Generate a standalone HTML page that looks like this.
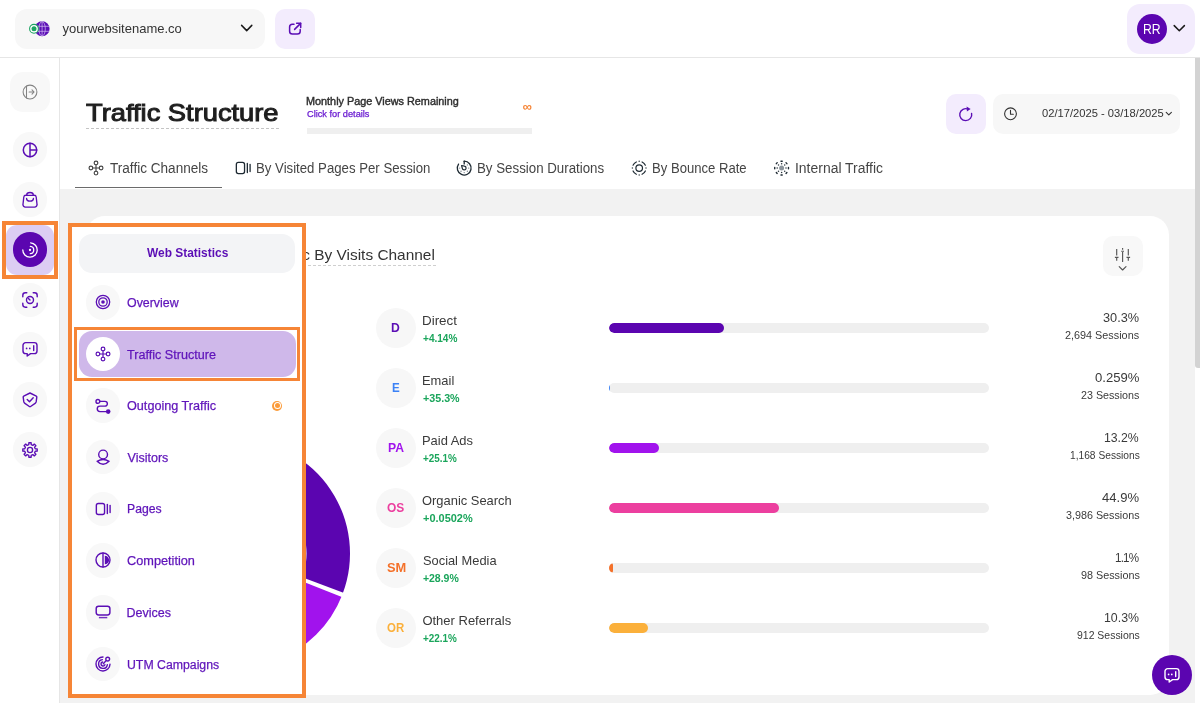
<!DOCTYPE html>
<html lang="en">
<head>
<meta charset="utf-8">
<title>Traffic Structure</title>
<style>
*{box-sizing:border-box;margin:0;padding:0}
html,body{width:1200px;height:703px;overflow:hidden;background:#fff}
body{font-family:"Liberation Sans",sans-serif;color:#333;position:relative}
#root{position:absolute;left:0;top:0;width:1200px;height:703px;will-change:transform}
.abs{position:absolute}
.t{position:absolute;white-space:nowrap;line-height:1}
svg{position:absolute;overflow:visible}
#header{position:absolute;left:0;top:0;width:1200px;height:58px;background:#fff;border-bottom:1px solid #e6e6e6}
#sidebar{position:absolute;left:0;top:58px;width:60px;height:645px;background:#fff;border-right:1px solid #e6e6e6}
#grey{position:absolute;left:60px;top:188.5px;width:1135px;height:515px;background:#f2f2f2}
#card{position:absolute;left:86px;top:215.5px;width:1083.3px;height:479.4px;background:#fff;border-radius:19px}
.track{position:absolute;left:608.8px;width:380.2px;height:10.2px;border-radius:5.1px;background:#efefef;overflow:hidden}
.fill{position:absolute;left:0;top:0;height:10.2px;border-radius:5.1px}
</style>
</head>
<body>
<div id="root">
<div id="header"></div>
<div class="abs" style="left:15px;top:8.75px;width:250px;height:40px;background:#f7f7f7;border-radius:12px"></div>
<svg style="left:28px;top:20px" width="24" height="18" viewBox="28 20 24 18">
<circle cx="42.1" cy="28.8" r="7.5" fill="#5b0eb5"/>
<g stroke="#d9c4f5" stroke-width="0.8" fill="none" stroke-opacity="0.85"><ellipse cx="42.1" cy="28.8" rx="3.2" ry="7.2"/><line x1="42.1" y1="21.5" x2="42.1" y2="36"/><line x1="35" y1="26.3" x2="49.4" y2="26.3"/><line x1="35" y1="31.3" x2="49.4" y2="31.3"/></g>
<circle cx="34" cy="28.8" r="4.4" fill="#fff" stroke="#1da463" stroke-width="1.1"/><circle cx="34" cy="28.8" r="2.5" fill="#1da463"/></svg>
<div class="t" style="left:62.60px;top:21.60px;font-size:13px;color:#333">yourwebsitename.co</div>
<svg style="left:240px;top:23px" width="14" height="10" viewBox="240 23 14 10"><path d="M241.6 25.4 L246.7 30.6 L251.8 25.4" fill="none" stroke="#1a1a1a" stroke-width="1.5" stroke-linecap="round" stroke-linejoin="round"/></svg>
<div class="abs" style="left:275px;top:8.75px;width:40px;height:40px;background:#f3ecfd;border-radius:10px"></div>
<svg style="left:287px;top:21px" width="16" height="16" viewBox="287 21 16 16"><g fill="none" stroke="#5b0eb5" stroke-width="1.5" stroke-linecap="round" stroke-linejoin="round"><path d="M294 24.3 H292.4 a2.8 2.8 0 0 0 -2.8 2.8 V31.2 a2.8 2.8 0 0 0 2.8 2.8 H297.4 a2.8 2.8 0 0 0 2.8 -2.8 V29.6"/><path d="M294.6 29.4 L300.6 23.4"/><path d="M296.6 23.3 H300.7 V27.4"/></g></svg>
<div class="abs" style="left:1127px;top:4px;width:68px;height:50px;background:#f3ecfd;border-radius:13px"></div>
<div class="abs" style="left:1136.5px;top:14px;width:30px;height:30px;background:#5b05b0;border-radius:50%"></div>
<div class="t" style="left:1142.69px;top:22.15px;font-size:14px;color:#fff;transform:scaleX(0.8744);transform-origin:left center">RR</div>
<svg style="left:1172px;top:23px" width="14" height="10" viewBox="1172 23 14 10"><path d="M1174.2 25.6 L1179.3 30.8 L1184.4 25.6" fill="none" stroke="#1a1a1a" stroke-width="1.5" stroke-linecap="round" stroke-linejoin="round"/></svg>
<div id="sidebar"></div>
<div class="abs" style="left:10px;top:71.5px;width:40px;height:40px;background:#f8f8f8;border-radius:13px"></div>
<svg style="left:18.0px;top:79.7px;color:#838383" width="24" height="24" viewBox="-12.0 -12.0 24 24"><g fill="none" stroke="currentColor" stroke-width="1.05" stroke-linecap="round" stroke-linejoin="round"><circle cx="0" cy="0" r="6.9"/><path d="M-3.5 -5.9 V5.9"/><path d="M-0.9 0 H4 M2 -2.1 L4.1 0 L2 2.1"/></g></svg>
<div class="abs" style="left:12.7px;top:132.45px;width:34.6px;height:34.6px;background:#f8f8f8;border-radius:50%"></div>
<div class="abs" style="left:12.7px;top:182.45px;width:34.6px;height:34.6px;background:#f8f8f8;border-radius:50%"></div>
<div class="abs" style="left:12.7px;top:282.59999999999997px;width:34.6px;height:34.6px;background:#f8f8f8;border-radius:50%"></div>
<div class="abs" style="left:12.7px;top:332.4px;width:34.6px;height:34.6px;background:#f8f8f8;border-radius:50%"></div>
<div class="abs" style="left:12.7px;top:382.3px;width:34.6px;height:34.6px;background:#f8f8f8;border-radius:50%"></div>
<div class="abs" style="left:12.7px;top:432.4px;width:34.6px;height:34.6px;background:#f8f8f8;border-radius:50%"></div>
<svg style="left:18.0px;top:137.75px;color:#5b0eb5" width="24" height="24" viewBox="-12.0 -12.0 24 24"><g fill="none" stroke="currentColor" stroke-width="1.5" stroke-linecap="round" stroke-linejoin="round"><circle cx="0" cy="0" r="6.7"/><path d="M0 -6.7 V6.7 M0 0 H6.7"/></g></svg>
<svg style="left:18.0px;top:187.75px;color:#5b0eb5" width="24" height="24" viewBox="-12.0 -12.0 24 24"><g fill="none" stroke="currentColor" stroke-width="1.35" stroke-linecap="round" stroke-linejoin="round"><path d="M-4.2 -4.7 H4.2 a2 2 0 0 1 2 1.7 L7 4.2 a2.5 2.5 0 0 1 -2.5 2.9 H-4.5 a2.5 2.5 0 0 1 -2.5 -2.9 L-6.2 -3 a2 2 0 0 1 2 -1.7 Z"/><path d="M-3.3 -4.9 a3.3 2.6 0 0 1 6.6 0"/><path d="M-3.4 -1.5 v0.3 a3.4 2.4 0 0 0 6.8 0 v-0.3"/></g></svg>
<div class="abs" style="left:2px;top:221px;width:56px;height:58px;border:4px solid #f68536;background:#fff"></div>
<div class="abs" style="left:6px;top:225px;width:48px;height:50px;background:#dccdf3;border-radius:11px"></div>
<div class="abs" style="left:12.7px;top:232.2px;width:34.8px;height:34.8px;background:#5b05b0;border-radius:50%"></div>
<svg style="left:18.1px;top:237.9px;color:#fff" width="24" height="24" viewBox="-12.0 -12.0 24 24"><g fill="none" stroke="currentColor" stroke-width="1.3" stroke-linecap="round" stroke-linejoin="round"><path d="M0.63 -7.17 A7.2 7.2 0 1 1 -7.20 0.00"/><path d="M0.32 -3.69 A3.7 3.7 0 0 1 0.32 3.69"/></g><circle cx="0" cy="0" r="1.15" fill="#fff"/></svg>
<svg style="left:18.0px;top:287.9px;color:#5b0eb5" width="24" height="24" viewBox="-12.0 -12.0 24 24"><g fill="none" stroke="currentColor" stroke-width="1.4" stroke-linecap="round" stroke-linejoin="round"><path d="M-7.2 -3.2 V-4.6 a2.6 2.6 0 0 1 2.6 -2.6 H-3.2"/><path d="M7.2 -3.2 V-4.6 a2.6 2.6 0 0 0 -2.6 -2.6 H3.2"/><path d="M7.2 3.2 V4.6 a2.6 2.6 0 0 1 -2.6 2.6 H3.2"/><path d="M-7.2 3.2 V4.6 a2.6 2.6 0 0 0 2.6 2.6 H-3.2"/><circle cx="0" cy="0" r="3.5"/><path d="M0 0 L-1.6 -1.6"/></g></svg>
<svg style="left:18.0px;top:337.4px;color:#5b0eb5" width="24" height="24" viewBox="-12.0 -12.0 24 24"><g fill="none" stroke="currentColor" stroke-width="1.4" stroke-linecap="round" stroke-linejoin="round"><path d="M-4.3 -6.4 H4.3 a2.7 2.7 0 0 1 2.7 2.7 V1.9 a2.7 2.7 0 0 1 -2.7 2.7 H0.6 L-2.8 7 V4.6 H-4.3 a2.7 2.7 0 0 1 -2.7 -2.7 V-3.7 a2.7 2.7 0 0 1 2.7 -2.7 Z"/><path d="M3.7 -3.3 V1.6"/></g><circle cx="-3.4" cy="-0.6" r="0.85" fill="currentColor"/><circle cx="-0.2" cy="-0.6" r="0.85" fill="currentColor"/></svg>
<svg style="left:18.0px;top:387.6px;color:#5b0eb5" width="24" height="24" viewBox="-12.0 -12.0 24 24"><g fill="none" stroke="currentColor" stroke-width="1.4" stroke-linecap="round" stroke-linejoin="round"><path d="M0 -7 L6.3 -3.9 Q6.9 -3.6 6.8 -2.9 L6.2 1.7 Q6 2.8 5.1 3.4 L0.6 6.5 Q0 6.9 -0.6 6.5 L-5.1 3.4 Q-6 2.8 -6.2 1.7 L-6.8 -2.9 Q-6.9 -3.6 -6.3 -3.9 Z"/><path d="M-2.8 -0.5 L-0.5 1.8 L3.2 -2.3"/></g></svg>
<svg style="left:18.0px;top:437.7px;color:#5b0eb5" width="24" height="24" viewBox="-12.0 -12.0 24 24"><g fill="none" stroke="currentColor" stroke-width="1.35" stroke-linecap="round" stroke-linejoin="round"><path d="M-1.21 -5.26 L-1.14 -7.21 L1.14 -7.21 L1.21 -5.26 L2.86 -4.58 L4.29 -5.91 L5.91 -4.29 L4.58 -2.86 L5.26 -1.21 L7.21 -1.14 L7.21 1.14 L5.26 1.21 L4.58 2.86 L5.91 4.29 L4.29 5.91 L2.86 4.58 L1.21 5.26 L1.14 7.21 L-1.14 7.21 L-1.21 5.26 L-2.86 4.58 L-4.29 5.91 L-5.91 4.29 L-4.58 2.86 L-5.26 1.21 L-7.21 1.14 L-7.21 -1.14 L-5.26 -1.21 L-4.58 -2.86 L-5.91 -4.29 L-4.29 -5.91 L-2.86 -4.58 Z"/><circle cx="0" cy="0" r="2.6"/></g></svg>
<div class="t" style="left:86.07px;top:101.28px;font-size:24px;color:#1e1e1e;transform:scaleX(1.1367);transform-origin:left center;-webkit-text-stroke:1px #1e1e1e">Traffic Structure</div>
<div class="abs" style="left:86px;top:128px;width:193px;height:0;border-top:1px dashed #c4c4c4"></div>
<div class="t" style="left:306.42px;top:95.61px;font-size:10.5px;color:#2e2e2e;transform:scaleX(1.0323);transform-origin:left center;-webkit-text-stroke:0.4px #2e2e2e">Monthly Page Views Remaining</div>
<div class="t" style="left:306.84px;top:109.78px;font-size:9px;color:#6a1bd1;transform:scaleX(1.0238);transform-origin:left center;-webkit-text-stroke:0.25px #6a1bd1">Click for details</div>
<div class="t" style="left:522.5px;top:100px;font-size:13px;font-weight:bold;color:#f68536">&#8734;</div>
<div class="abs" style="left:307.3px;top:127.7px;width:225px;height:6px;background:#efefef"></div>
<div class="abs" style="left:946px;top:94px;width:40px;height:40px;background:#f3ecfd;border-radius:10px"></div>
<svg style="left:957px;top:106px" width="18" height="18" viewBox="957 106 18 18"><g fill="none" stroke="#5b0eb5" stroke-width="1.4" stroke-linecap="round" stroke-linejoin="round"><path d="M968.2 109.2 A6 6 0 1 0 971.6 113.4"/></g><path d="M966.6 106.6 L970.6 109.1 L966.9 111.6 Z" fill="#5b0eb5"/></svg>
<div class="abs" style="left:992.7px;top:94px;width:187.3px;height:40px;background:#f7f7f7;border-radius:10px"></div>
<svg style="left:1003px;top:106px" width="16" height="16" viewBox="1003 106 16 16"><g fill="none" stroke="#333" stroke-width="1.1" stroke-linecap="round" stroke-linejoin="round"><circle cx="1010.5" cy="113.8" r="5.9"/><path d="M1010.5 110.4 V114.3 H1013.3"/></g></svg>
<div class="t" style="left:1042.29px;top:108.39px;font-size:11px;color:#333;transform:scaleX(1.0154);transform-origin:left center">02/17/2025 - 03/18/2025</div>
<svg style="left:1165px;top:111px" width="8" height="6" viewBox="1165 111 8 6"><path d="M1166.2 112.4 L1168.8 114.9 L1171.4 112.4" fill="none" stroke="#333" stroke-width="1.1" stroke-linecap="round" stroke-linejoin="round"/></svg>
<svg style="left:83.75px;top:156.1px;color:#444" width="24" height="24" viewBox="-12.0 -12.0 24 24"><g fill="none" stroke="currentColor" stroke-width="1.15" stroke-linecap="round" stroke-linejoin="round"><circle cx="0" cy="-5.1" r="1.85"/><circle cx="0" cy="5.1" r="1.85"/><circle cx="-5.1" cy="0" r="1.85"/><circle cx="5.1" cy="0" r="1.85"/><path d="M0 -3.25 V3.25 M-3.25 0 H3.25"/></g></svg>
<div class="t" style="left:109.99px;top:161.05px;font-size:14px;color:#454545;transform:scaleX(0.9701);transform-origin:left center">Traffic Channels</div>
<svg style="left:230.5px;top:156.1px;color:#1e2a33" width="24" height="24" viewBox="-12.0 -12.0 24 24"><g fill="none" stroke="currentColor" stroke-width="1.3" stroke-linecap="round" stroke-linejoin="round"><rect x="-6.65" y="-5.55" width="8.2" height="11.1" rx="2"/><path d="M4.35 -4.6 V4.6"/><path d="M7.1 -3.5 V3.5"/></g></svg>
<div class="t" style="left:255.77px;top:161.05px;font-size:14px;color:#454545;transform:scaleX(0.9428);transform-origin:left center">By Visited Pages Per Session</div>
<svg style="left:455px;top:159px" width="18" height="18" viewBox="455 159 18 18"><g fill="none" stroke="#1e2a33" stroke-width="1.3" stroke-linecap="round" stroke-linejoin="round"><path d="M464.20 161.20 A6.9 6.9 0 1 1 458.55 164.14"/><path d="M464.2 161.2 V163.9"/><path d="M461.59999999999997 165.5 L464.5 166.2 A1.9 1.9 0 1 1 462.3 168.4 Z" stroke-width="1.2"/></g><g fill="#7a858d"><circle cx="467.38" cy="164.92" r="0.7"/><circle cx="468.70" cy="168.10" r="0.7"/><circle cx="467.38" cy="171.28" r="0.7"/><circle cx="464.20" cy="172.60" r="0.7"/><circle cx="461.02" cy="171.28" r="0.7"/><circle cx="459.70" cy="168.10" r="0.7"/></g></svg>
<div class="t" style="left:477.26px;top:161.05px;font-size:14px;color:#454545;transform:scaleX(0.9500);transform-origin:left center">By Session Durations</div>
<svg style="left:630px;top:159px" width="18" height="18" viewBox="630 159 18 18"><g fill="none" stroke="#1e2a33" stroke-width="1.2" stroke-linecap="round"><circle cx="639.2" cy="168.1" r="3.3"/><path d="M642.07 161.94 A6.8 6.8 0 0 1 645.36 165.23"/><path d="M645.36 170.97 A6.8 6.8 0 0 1 642.07 174.26"/><path d="M636.33 174.26 A6.8 6.8 0 0 1 633.04 170.97"/><path d="M633.04 165.23 A6.8 6.8 0 0 1 636.33 161.94"/></g><g fill="#3a444c"><circle cx="639.20" cy="161.30" r="0.75"/><circle cx="646.00" cy="168.10" r="0.75"/><circle cx="639.20" cy="174.90" r="0.75"/><circle cx="632.40" cy="168.10" r="0.75"/></g></svg>
<div class="t" style="left:652.48px;top:161.05px;font-size:14px;color:#454545;transform:scaleX(0.9356);transform-origin:left center">By Bounce Rate</div>
<svg style="left:772px;top:159px" width="19" height="19" viewBox="772 159 19 19"><circle cx="781.6" cy="168.1" r="2.5" fill="#8b949b"/><g fill="none" stroke="#1e2a33" stroke-width="1.4" stroke-linecap="round"><path d="M781.00 161.23 A6.9 6.9 0 0 1 782.20 161.23"/><path d="M786.04 162.81 A6.9 6.9 0 0 1 786.89 163.66"/><path d="M788.47 167.50 A6.9 6.9 0 0 1 788.47 168.70"/><path d="M786.89 172.54 A6.9 6.9 0 0 1 786.04 173.39"/><path d="M782.20 174.97 A6.9 6.9 0 0 1 781.00 174.97"/><path d="M777.16 173.39 A6.9 6.9 0 0 1 776.31 172.54"/><path d="M774.73 168.70 A6.9 6.9 0 0 1 774.73 167.50"/><path d="M776.31 163.66 A6.9 6.9 0 0 1 777.16 162.81"/></g><g fill="#2a353d"><circle cx="781.60" cy="163.70" r="0.75"/><circle cx="784.71" cy="164.99" r="0.75"/><circle cx="786.00" cy="168.10" r="0.75"/><circle cx="784.71" cy="171.21" r="0.75"/><circle cx="781.60" cy="172.50" r="0.75"/><circle cx="778.49" cy="171.21" r="0.75"/><circle cx="777.20" cy="168.10" r="0.75"/><circle cx="778.49" cy="164.99" r="0.75"/></g></svg>
<div class="t" style="left:794.61px;top:161.05px;font-size:14px;color:#454545;transform:scaleX(0.9955);transform-origin:left center">Internal Traffic</div>
<div class="abs" style="left:75px;top:186.5px;width:146.5px;height:1.5px;background:#6b6b6b"></div>
<div id="grey"></div>
<div class="abs" style="left:1195px;top:58px;width:5px;height:645px;background:#fff"></div>
<div class="abs" style="left:1195.2px;top:57.8px;width:8px;height:310.5px;background:#d3d3d3;border-radius:0 0 0 3px"></div>
<div id="card"></div>
<svg style="left:110px;top:430px" width="250" height="250" viewBox="110 430 250 250"><path d="M238.70 439.04 A114.5 114.5 0 0 1 342.67 593.82 L301.95 578.50 A71 71 0 0 0 237.48 482.53 Z" fill="#5b05b0"/><path d="M342.67 593.82 A114.5 114.5 0 0 1 342.00 595.55 L301.54 579.58 A71 71 0 0 0 301.95 578.50 Z" fill="#3b82f6"/><path d="M342.00 595.55 A114.5 114.5 0 0 1 276.46 660.42 L260.90 619.80 A71 71 0 0 0 301.54 579.58 Z" fill="#a113ed"/><path d="M276.46 660.42 A114.5 114.5 0 0 1 162.80 465.04 L190.42 498.65 A71 71 0 0 0 260.90 619.80 Z" fill="#ec3f9f"/><path d="M162.80 465.04 A114.5 114.5 0 0 1 169.08 460.24 L194.31 495.67 A71 71 0 0 0 190.42 498.65 Z" fill="#f4712a"/><path d="M169.08 460.24 A114.5 114.5 0 0 1 238.70 439.04 L237.48 482.53 A71 71 0 0 0 194.31 495.67 Z" fill="#fbb03b"/><path d="M238.72 438.05 L237.45 483.53" stroke="#fff" stroke-width="2.6"/><path d="M343.60 594.17 L301.02 578.15" stroke="#fff" stroke-width="2.6"/><path d="M342.93 595.92 L300.61 579.21" stroke="#fff" stroke-width="2.6"/><path d="M276.82 661.36 L260.54 618.87" stroke="#fff" stroke-width="2.6"/><path d="M162.16 464.27 L191.05 499.42" stroke="#fff" stroke-width="2.6"/><path d="M168.50 459.42 L194.89 496.48" stroke="#fff" stroke-width="2.6"/></svg>
<div class="t" style="left:268.18px;top:246.60px;font-size:15px;color:#333;transform:scaleX(1.0280);transform-origin:left center">Traffic By Visits Channel</div>
<div class="abs" style="left:268px;top:265px;width:167.5px;height:0;border-top:1px dashed #cfcfcf"></div>
<div class="abs" style="left:1102.5px;top:235.5px;width:40px;height:40px;background:#f8f8f8;border-radius:10px"></div>
<svg style="left:1112px;top:245px" width="22" height="28" viewBox="1112 245 22 28"><g fill="none" stroke="#555" stroke-width="1.15" stroke-linecap="butt"><path d="M1116.7 249 V255.6 M1116.7 258 V260.8 M1114.9 257.4 H1118.5"/><path d="M1122.6 248 V249.8 M1122.6 252 V262 M1121.2 251.2 H1124"/><path d="M1128.3 249 V255.6 M1128.3 258 V260.8 M1126.5 257.4 H1130.1"/><path d="M1119.2 266.6 L1122.6 270 L1126 266.6" stroke-linecap="round" stroke-linejoin="round"/></g></svg>
<div class="abs" style="left:376px;top:308px;width:40px;height:40px;background:#f7f7f7;border-radius:50%"></div>
<div class="t" style="left:391.34px;top:321.40px;font-size:13px;color:#5b0eb5;font-weight:bold;transform:scaleX(0.9354);transform-origin:left center">D</div>
<div class="t" style="left:421.95px;top:314.00px;font-size:13px;color:#3a3a3a;transform:scaleX(1.0311);transform-origin:left center">Direct</div>
<div class="t" style="left:422.92px;top:332.71px;font-size:10.5px;color:#1aa55b;font-weight:bold;transform:scaleX(0.9584);transform-origin:left center">+4.14%</div>
<div class="track" style="top:323px"><div class="fill" style="width:115.1px;background:#5b05b0"></div></div>
<div class="t" style="left:1103.10px;top:311.10px;font-size:13px;color:#3a3a3a;transform:scaleX(0.9787);transform-origin:left center">30.3%</div>
<div class="t" style="left:1065.28px;top:329.91px;font-size:10.5px;color:#3a3a3a;transform:scaleX(1.0317);transform-origin:left center">2,694 Sessions</div>
<div class="abs" style="left:376px;top:368px;width:40px;height:40px;background:#f7f7f7;border-radius:50%"></div>
<div class="t" style="left:391.83px;top:381.40px;font-size:13px;color:#3b82f6;font-weight:bold;transform:scaleX(0.8915);transform-origin:left center">E</div>
<div class="t" style="left:421.99px;top:374.00px;font-size:13px;color:#3a3a3a;transform:scaleX(0.9924);transform-origin:left center">Email</div>
<div class="t" style="left:422.89px;top:392.71px;font-size:10.5px;color:#1aa55b;font-weight:bold;transform:scaleX(1.0208);transform-origin:left center">+35.3%</div>
<div class="track" style="top:383px"><div class="fill" style="width:1.2px;background:#3b82f6"></div></div>
<div class="t" style="left:1094.79px;top:371.10px;font-size:13px;color:#3a3a3a;transform:scaleX(1.0070);transform-origin:left center">0.259%</div>
<div class="t" style="left:1080.99px;top:389.91px;font-size:10.5px;color:#3a3a3a;transform:scaleX(1.0204);transform-origin:left center">23 Sessions</div>
<div class="abs" style="left:376px;top:428px;width:40px;height:40px;background:#f7f7f7;border-radius:50%"></div>
<div class="t" style="left:387.64px;top:441.40px;font-size:13px;color:#a113ed;font-weight:bold;transform:scaleX(0.9355);transform-origin:left center">PA</div>
<div class="t" style="left:421.99px;top:434.00px;font-size:13px;color:#3a3a3a;transform:scaleX(0.9939);transform-origin:left center">Paid Ads</div>
<div class="t" style="left:422.92px;top:452.71px;font-size:10.5px;color:#1aa55b;font-weight:bold;transform:scaleX(0.9414);transform-origin:left center">+25.1%</div>
<div class="track" style="top:443px"><div class="fill" style="width:50.2px;background:#a113ed"></div></div>
<div class="t" style="left:1104.43px;top:431.10px;font-size:13px;color:#3a3a3a;transform:scaleX(0.9422);transform-origin:left center">13.2%</div>
<div class="t" style="left:1069.52px;top:449.91px;font-size:10.5px;color:#3a3a3a;transform:scaleX(0.9724);transform-origin:left center">1,168 Sessions</div>
<div class="abs" style="left:376px;top:488px;width:40px;height:40px;background:#f7f7f7;border-radius:50%"></div>
<div class="t" style="left:387.23px;top:501.40px;font-size:13px;color:#ec3f9f;font-weight:bold;transform:scaleX(0.9205);transform-origin:left center">OS</div>
<div class="t" style="left:422.39px;top:494.00px;font-size:13px;color:#3a3a3a;transform:scaleX(0.9935);transform-origin:left center">Organic Search</div>
<div class="t" style="left:422.88px;top:512.71px;font-size:10.5px;color:#1aa55b;font-weight:bold;transform:scaleX(1.0437);transform-origin:left center">+0.0502%</div>
<div class="track" style="top:503px"><div class="fill" style="width:170.6px;background:#ec3f9f"></div></div>
<div class="t" style="left:1102.20px;top:491.10px;font-size:13px;color:#3a3a3a;transform:scaleX(1.0036);transform-origin:left center">44.9%</div>
<div class="t" style="left:1065.79px;top:509.91px;font-size:10.5px;color:#3a3a3a;transform:scaleX(1.0247);transform-origin:left center">3,986 Sessions</div>
<div class="abs" style="left:376px;top:548px;width:40px;height:40px;background:#f7f7f7;border-radius:50%"></div>
<div class="t" style="left:386.50px;top:561.40px;font-size:13px;color:#f4712a;font-weight:bold;transform:scaleX(0.9880);transform-origin:left center">SM</div>
<div class="t" style="left:422.60px;top:554.00px;font-size:13px;color:#3a3a3a;transform:scaleX(0.9878);transform-origin:left center">Social Media</div>
<div class="t" style="left:422.90px;top:572.71px;font-size:10.5px;color:#1aa55b;font-weight:bold">+28.9%</div>
<div class="track" style="top:563px"><div class="fill" style="width:4.2px;background:#f4712a"></div></div>
<div class="t" style="left:1115.07px;top:551.10px;font-size:13px;color:#3a3a3a;letter-spacing:-0.9px;transform:scaleX(0.8939);transform-origin:left center">1.1%</div>
<div class="t" style="left:1080.54px;top:569.91px;font-size:10.5px;color:#3a3a3a;transform:scaleX(1.0283);transform-origin:left center">98 Sessions</div>
<div class="abs" style="left:376px;top:608px;width:40px;height:40px;background:#f7f7f7;border-radius:50%"></div>
<div class="t" style="left:387.24px;top:621.40px;font-size:13px;color:#fbb03b;font-weight:bold;transform:scaleX(0.8808);transform-origin:left center">OR</div>
<div class="t" style="left:422.39px;top:614.00px;font-size:13px;color:#3a3a3a">Other Referrals</div>
<div class="t" style="left:422.92px;top:632.71px;font-size:10.5px;color:#1aa55b;font-weight:bold;transform:scaleX(0.9442);transform-origin:left center">+22.1%</div>
<div class="track" style="top:623px"><div class="fill" style="width:39.1px;background:#fbb03b"></div></div>
<div class="t" style="left:1104.13px;top:611.10px;font-size:13px;color:#3a3a3a;transform:scaleX(0.9506);transform-origin:left center">10.3%</div>
<div class="t" style="left:1076.55px;top:629.91px;font-size:10.5px;color:#3a3a3a;transform:scaleX(0.9961);transform-origin:left center">912 Sessions</div>
<div class="abs" style="left:1151.6px;top:654.8px;width:40px;height:40px;background:#5b05b0;border-radius:50%"></div>
<svg style="left:1159.6px;top:662.7px;color:#fff" width="24" height="24" viewBox="-12.0 -12.0 24 24"><g fill="none" stroke="currentColor" stroke-width="1.4" stroke-linecap="round" stroke-linejoin="round"><path d="M-4.3 -6.4 H4.3 a2.7 2.7 0 0 1 2.7 2.7 V1.9 a2.7 2.7 0 0 1 -2.7 2.7 H0.6 L-2.8 7 V4.6 H-4.3 a2.7 2.7 0 0 1 -2.7 -2.7 V-3.7 a2.7 2.7 0 0 1 2.7 -2.7 Z"/><path d="M3.7 -3.3 V1.6"/></g><circle cx="-3.4" cy="-0.6" r="0.85" fill="currentColor"/><circle cx="-0.2" cy="-0.6" r="0.85" fill="currentColor"/></svg>
<div class="abs" style="left:68px;top:223px;width:238px;height:475px;background:#fff;border:4.4px solid #f68536"></div>
<div class="abs" style="left:79px;top:233.5px;width:216px;height:39.5px;background:#f3f4f6;border-radius:13px"></div>
<div class="t" style="left:146.70px;top:247.14px;font-size:12px;color:#5b0eb5;font-weight:bold;transform:scaleX(0.9935);transform-origin:left center">Web Statistics</div>
<div class="abs" style="left:74px;top:327px;width:226px;height:54px;border:3.6px solid #f68536;background:#fff"></div>
<div class="abs" style="left:79px;top:331px;width:216.5px;height:46px;background:#cfb8ea;border-radius:13px"></div>
<div class="abs" style="left:85.6px;top:285.2px;width:34.4px;height:34.4px;background:#f8f8f8;border-radius:50%"></div>
<div class="t" style="left:127.06px;top:297.12px;font-size:12.5px;color:#5f14ba;transform:scaleX(0.9900);transform-origin:left center;-webkit-text-stroke:0.25px #5f14ba">Overview</div>
<div class="abs" style="left:85.6px;top:336.8px;width:34.4px;height:34.4px;background:#fff;border-radius:50%"></div>
<div class="t" style="left:127.35px;top:348.72px;font-size:12.5px;color:#5f14ba;transform:scaleX(1.0078);transform-origin:left center;-webkit-text-stroke:0.25px #5f14ba">Traffic Structure</div>
<div class="abs" style="left:85.6px;top:388.3px;width:34.4px;height:34.4px;background:#f8f8f8;border-radius:50%"></div>
<div class="t" style="left:127.04px;top:400.22px;font-size:12.5px;color:#5f14ba;transform:scaleX(1.0116);transform-origin:left center;-webkit-text-stroke:0.25px #5f14ba">Outgoing Traffic</div>
<div class="abs" style="left:85.6px;top:439.90000000000003px;width:34.4px;height:34.4px;background:#f8f8f8;border-radius:50%"></div>
<div class="t" style="left:127.55px;top:451.82px;font-size:12.5px;color:#5f14ba;-webkit-text-stroke:0.25px #5f14ba">Visitors</div>
<div class="abs" style="left:85.6px;top:491.5px;width:34.4px;height:34.4px;background:#f8f8f8;border-radius:50%"></div>
<div class="t" style="left:126.62px;top:503.42px;font-size:12.5px;color:#5f14ba;transform:scaleX(0.9767);transform-origin:left center;-webkit-text-stroke:0.25px #5f14ba">Pages</div>
<div class="abs" style="left:85.6px;top:543.1999999999999px;width:34.4px;height:34.4px;background:#f8f8f8;border-radius:50%"></div>
<div class="t" style="left:126.99px;top:555.12px;font-size:12.5px;color:#5f14ba;transform:scaleX(1.0184);transform-origin:left center;-webkit-text-stroke:0.25px #5f14ba">Competition</div>
<div class="abs" style="left:85.6px;top:595.1999999999999px;width:34.4px;height:34.4px;background:#f8f8f8;border-radius:50%"></div>
<div class="t" style="left:126.60px;top:607.12px;font-size:12.5px;color:#5f14ba;-webkit-text-stroke:0.25px #5f14ba">Devices</div>
<div class="abs" style="left:85.6px;top:646.8px;width:34.4px;height:34.4px;background:#f8f8f8;border-radius:50%"></div>
<div class="t" style="left:126.67px;top:658.72px;font-size:12.5px;color:#5f14ba;transform:scaleX(0.9830);transform-origin:left center;-webkit-text-stroke:0.25px #5f14ba">UTM Campaigns</div>
<svg style="left:90.8px;top:290.1px;color:#5b0eb5" width="24" height="24" viewBox="-12.0 -12.0 24 24"><g fill="none" stroke="currentColor" stroke-width="1.3" stroke-linecap="round" stroke-linejoin="round"><circle cx="0" cy="0" r="6.7"/><circle cx="0" cy="0" r="4.2"/></g><circle cx="0" cy="0" r="1.8" fill="currentColor"/></svg>
<svg style="left:90.89999999999999px;top:342.0px;color:#5b0eb5" width="24" height="24" viewBox="-12.0 -12.0 24 24"><g fill="none" stroke="currentColor" stroke-width="1.2" stroke-linecap="round" stroke-linejoin="round"><circle cx="0" cy="-5.1" r="1.85"/><circle cx="0" cy="5.1" r="1.85"/><circle cx="-5.1" cy="0" r="1.85"/><circle cx="5.1" cy="0" r="1.85"/><path d="M0 -3.25 V3.25 M-3.25 0 H3.25"/></g></svg>
<svg style="left:90.8px;top:393.5px;color:#5b0eb5" width="24" height="24" viewBox="-12.0 -12.0 24 24"><g fill="none" stroke="currentColor" stroke-width="1.4" stroke-linecap="round" stroke-linejoin="round"><circle cx="-5.1" cy="-4.6" r="1.9"/><path d="M-3.2 -4.6 H2 a2.3 2.3 0 0 1 0 4.7 H-3 a2.7 2.7 0 0 0 0 5.5 H3.5"/></g><circle cx="5.2" cy="5.6" r="2.3" fill="currentColor"/></svg>
<svg style="left:90.8px;top:445.1px;color:#5b0eb5" width="24" height="24" viewBox="-12.0 -12.0 24 24"><g fill="none" stroke="currentColor" stroke-width="1.4" stroke-linecap="round" stroke-linejoin="round"><circle cx="0.1" cy="-2.5" r="4.4"/><path d="M-5.9 4.3 Q0.1 0.6 6.1 4.3 Q0.1 10.3 -5.9 4.3 Z"/></g></svg>
<svg style="left:90.6px;top:496.7px;color:#5b0eb5" width="24" height="24" viewBox="-12.0 -12.0 24 24"><g fill="none" stroke="currentColor" stroke-width="1.4" stroke-linecap="round" stroke-linejoin="round"><rect x="-6.65" y="-5.55" width="8.2" height="11.1" rx="2"/><path d="M4.35 -4.6 V4.6"/><path d="M7.1 -3.5 V3.5"/></g></svg>
<svg style="left:90.89999999999999px;top:548.4px;color:#5b0eb5" width="24" height="24" viewBox="-12.0 -12.0 24 24"><g fill="none" stroke="currentColor" stroke-width="1.4" stroke-linecap="round" stroke-linejoin="round"><circle cx="0" cy="0" r="7"/><path d="M0 -7 V7"/></g><path d="M1.8 -4.3 A4.3 4.3 0 0 1 1.8 4.3 Z" fill="currentColor"/></svg>
<svg style="left:90.8px;top:600.4px;color:#5b0eb5" width="24" height="24" viewBox="-12.0 -12.0 24 24"><g fill="none" stroke="currentColor" stroke-width="1.45" stroke-linecap="round" stroke-linejoin="round"><rect x="-6.8" y="-5.8" width="13.7" height="8.8" rx="2.4"/><path d="M-4.1 5.6 H4.3" stroke-linecap="butt" stroke-opacity="0.85"/></g></svg>
<svg style="left:90.89999999999999px;top:651.9px;color:#5b0eb5" width="24" height="24" viewBox="-12.0 -12.0 24 24"><g fill="none" stroke="currentColor" stroke-width="1.4" stroke-linecap="round" stroke-linejoin="round"><path d="M7.00 0.24 A7 7 0 1 1 -0.00 -7.00"/><path d="M4.33 0.76 A4.4 4.4 0 1 1 -0.61 -4.36"/><path d="M1.88 0.68 A2 2 0 1 1 -0.35 -1.97"/><circle cx="4.7" cy="-4.9" r="1.9"/><path d="M0.3 -0.3 L3 -3.2"/></g></svg>
<div class="abs" style="left:272.1px;top:400.6px;width:10px;height:10px;background:#fb9b3a;border-radius:50%"></div>
<div class="abs" style="left:273.5px;top:402.0px;width:7.2px;height:7.2px;background:#fff;border-radius:50%"></div>
<div class="abs" style="left:274.6px;top:403.1px;width:5px;height:5px;background:#fb9b3a;border-radius:50%"></div>
</div>
</body>
</html>
